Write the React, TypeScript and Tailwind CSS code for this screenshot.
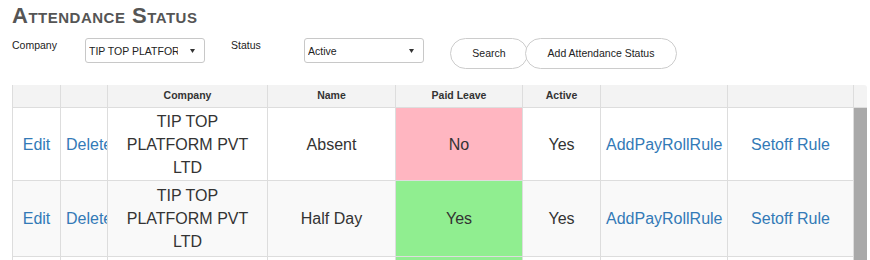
import React from 'react';

type Row = {
  company: string;
  name: string;
  paidLeave: boolean;
  active: boolean;
};

const rows: Row[] = [
  { company: 'TIP TOP PLATFORM PVT LTD', name: 'Absent', paidLeave: false, active: true },
  { company: 'TIP TOP PLATFORM PVT LTD', name: 'Half Day', paidLeave: true, active: true },
  { company: 'TIP TOP PLATFORM PVT LTD', name: 'Present', paidLeave: true, active: true },
];

// row heights as they sit in the grid (border included)
const rowHeights = ['h-[73px]', 'h-[76px]', 'h-[73px]'];

const cols = 'grid grid-cols-[48px_47px_160px_128px_127px_78px_127px_126px]';

const Caret = () => (
  <svg width="5" height="4" viewBox="0 0 5 4" className="shrink-0 ml-auto">
    <path d="M0 0 L5 0 L2.5 4 Z" fill="#333" />
  </svg>
);

const FakeSelect: React.FC<{ value: string; width: string; textWidth: string }> = ({ value, width, textWidth }) => (
  <div
    className={`${width} h-[25px] flex items-center border border-[#c8c8c8] rounded-[3px] bg-white pl-[3px] pr-[9px]`}
  >
    <div className={`${textWidth} overflow-hidden whitespace-nowrap text-[10.5px] text-[#222] leading-[14px]`}>
      {value}
    </div>
    <Caret />
  </div>
);

const Cell: React.FC<{ children?: React.ReactNode; className?: string }> = ({ children, className = '' }) => (
  <div className={`flex items-center overflow-hidden border-r border-b border-[#dddddd] px-[5px] ${className}`}>
    <div className="w-full text-center whitespace-normal">{children}</div>
  </div>
);

export default function App() {
  return (
    <div className="px-3 pt-[4px] bg-white font-['Liberation_Sans',Arial,sans-serif] text-[#333]">
      <h1 className="text-[22px] leading-[24px] font-bold tracking-[0.5px] text-[#555] [font-variant:small-caps]">
        Attendance Status
      </h1>

      {/* filters */}
      <div className="flex items-start mt-[10px]">
        <label className="w-[73px] text-[10.5px] leading-[15px] text-[#222]">Company</label>
        <FakeSelect value="TIP TOP PLATFORM PVT LTD" width="w-[120px]" textWidth="w-[89px]" />
        <label className="ml-[26px] w-[73px] text-[10.5px] leading-[15px] text-[#222]">Status</label>
        <FakeSelect value="Active" width="w-[120px]" textWidth="w-[60px]" />
        <button className="ml-[26px] w-[78px] h-[31px] rounded-full border border-[#cccccc] bg-white text-[10.5px] text-[#222]">
          Search
        </button>
        <button className="ml-[-3px] w-[152px] h-[31px] rounded-full border border-[#cccccc] bg-white text-[10.5px] text-[#222]">
          Add Attendance Status
        </button>
      </div>

      {/* table */}
      <div className="mt-[16px] w-[855px] rounded-tr-[3px] overflow-hidden">
        <div className="flex">
          <div className={`${cols} border-l border-[#dddddd] bg-[#f3f3f3] text-[10.5px] font-bold`}>
            {['', '', 'Company', 'Name', 'Paid Leave', 'Active', '', ''].map((h, i) => (
              <div key={i} className="h-[23px] flex items-center justify-center border-r border-b border-[#dddddd]">
                {h}
              </div>
            ))}
          </div>
          <div className="w-[13px] h-[23px] bg-[#f3f3f3] border-b border-[#dddddd]" />
        </div>

        <div className="flex">
          <div className="border-l border-[#dddddd] text-[16px] leading-[23px]">
            {rows.map((r, i) => (
              <div key={i} className={`${cols} ${rowHeights[i]} ${i % 2 === 1 ? 'bg-[#f9f9f9]' : 'bg-white'}`}>
                <Cell>
                  <a className="text-[#337ab7]">Edit</a>
                </Cell>
                <Cell>
                  <a className="text-[#337ab7] whitespace-nowrap">Delete</a>
                </Cell>
                <Cell>{r.company}</Cell>
                <Cell>{r.name}</Cell>
                <Cell className={r.paidLeave ? 'bg-[#90ee90]' : 'bg-[#ffb6c1]'}>{r.paidLeave ? 'Yes' : 'No'}</Cell>
                <Cell>{r.active ? 'Yes' : 'No'}</Cell>
                <Cell>
                  <a className="text-[#337ab7] whitespace-nowrap">AddPayRollRule</a>
                </Cell>
                <Cell>
                  <a className="text-[#337ab7] whitespace-nowrap">Setoff Rule</a>
                </Cell>
              </div>
            ))}
          </div>
          {/* scrollbar */}
          <div className="w-[13px] bg-[#a9a9a9]" />
        </div>
      </div>
    </div>
  );
}
